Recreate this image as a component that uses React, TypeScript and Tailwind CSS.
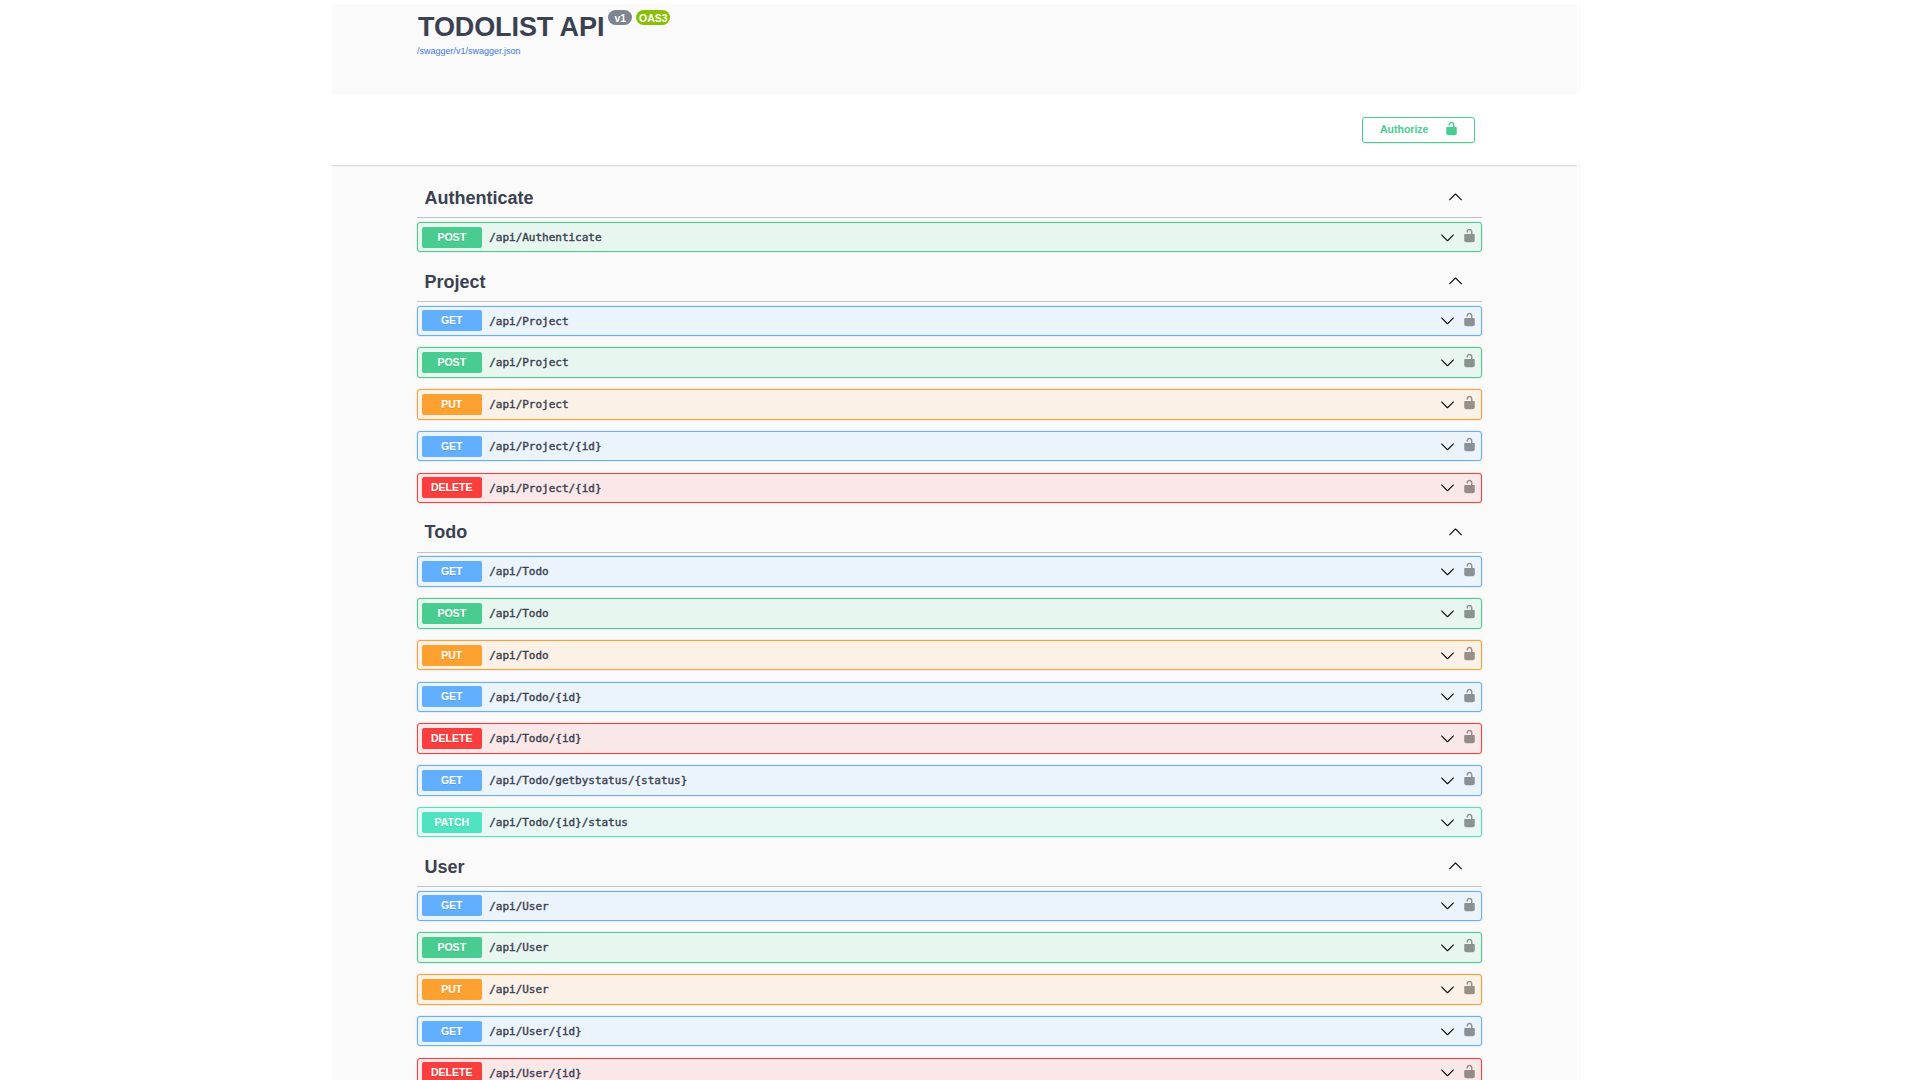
import React from "react";

type Method = "GET" | "POST" | "PUT" | "DELETE" | "PATCH";

const styles: Record<Method, { row: string; badge: string }> = {
  GET: { row: "border-[#61affe] bg-[#ebf3fb]", badge: "bg-[#61affe]" },
  POST: { row: "border-[#49cc90] bg-[#e8f6f0]", badge: "bg-[#49cc90]" },
  PUT: { row: "border-[#fca130] bg-[#fbf1e6]", badge: "bg-[#fca130]" },
  DELETE: { row: "border-[#f93e3e] bg-[#fae7e7]", badge: "bg-[#f93e3e]" },
  PATCH: { row: "border-[#50e3c2] bg-[#e9f8f5]", badge: "bg-[#50e3c2]" },
};

const sections: { name: string; ops: [Method, string][] }[] = [
  { name: "Authenticate", ops: [["POST", "/api/Authenticate"]] },
  {
    name: "Project",
    ops: [
      ["GET", "/api/Project"],
      ["POST", "/api/Project"],
      ["PUT", "/api/Project"],
      ["GET", "/api/Project/{id}"],
      ["DELETE", "/api/Project/{id}"],
    ],
  },
  {
    name: "Todo",
    ops: [
      ["GET", "/api/Todo"],
      ["POST", "/api/Todo"],
      ["PUT", "/api/Todo"],
      ["GET", "/api/Todo/{id}"],
      ["DELETE", "/api/Todo/{id}"],
      ["GET", "/api/Todo/getbystatus/{status}"],
      ["PATCH", "/api/Todo/{id}/status"],
    ],
  },
  {
    name: "User",
    ops: [
      ["GET", "/api/User"],
      ["POST", "/api/User"],
      ["PUT", "/api/User"],
      ["GET", "/api/User/{id}"],
      ["DELETE", "/api/User/{id}"],
    ],
  },
];

function Unlocked({ className }: { className: string }) {
  return (
    <svg viewBox="0 0 20 20" className={`size-[15px] shrink-0 ${className}`} fill="currentColor">
      <path d="M15.8 8H14V5.6C14 2.703 12.665 1 10 1 7.334 1 6 2.703 6 5.6V6h2v-.801C8 3.754 8.797 3 10 3c1.203 0 2 .754 2 2.199V8H4c-.553 0-1 .646-1 1.199V17c0 .549.428 1.139.951 1.307l1.197.387C5.672 18.861 6.55 19 7.1 19h5.8c.549 0 1.428-.139 1.951-.307l1.196-.387c.524-.167.953-.757.953-1.306V9.199C17 8.646 16.352 8 15.8 8z" />
    </svg>
  );
}

function Arrow({ up }: { up?: boolean }) {
  return (
    <svg
      viewBox="0 0 20 20"
      className={`size-[15px] shrink-0 text-black ${up ? "mb-[3px]" : ""}`}
      fill="currentColor"
    >
      {up ? (
        <path d="M17.418 14.908c.272.268.709.268.979 0s.271-.701 0-.969l-7.908-7.83c-.27-.268-.707-.268-.979 0l-7.908 7.83c-.27.268-.27.701 0 .969.271.268.709.268.979 0L10 7.767l7.418 7.141z" />
      ) : (
        <path d="M17.418 6.109c.272-.268.709-.268.979 0s.271.701 0 .969l-7.908 7.83c-.27.268-.707.268-.979 0l-7.908-7.83c-.27-.268-.27-.701 0-.969.271-.268.709-.268.979 0L10 13.25l7.418-7.141z" />
      )}
    </svg>
  );
}

function Operation({ method, path }: { method: Method; path: string }) {
  const s = styles[method];
  return (
    <div
      className={`mb-[11.25px] flex h-[30.5px] items-center rounded-[3px] border pl-[3.75px] pr-[4.25px] shadow-[0_0_2px_rgba(0,0,0,0.19)] ${s.row}`}
    >
      <span
        className={`h-[21px] w-[60px] rounded-[2px] text-center text-[10.5px] leading-[21.5px] font-bold text-white [text-shadow:0_1px_0_rgba(0,0,0,0.1)] ${s.badge}`}
      >
        {method}
      </span>
      <span className="ml-[7.5px] flex-1 pt-[1.75px] font-['DejaVu_Sans_Mono',monospace] text-[11px] leading-[14px] tracking-[-0.02px] [-webkit-text-stroke:0.4px_#3b4151]">
        {path}
      </span>
      <Arrow />
      <Unlocked className="mb-[3.5px] ml-[6.75px] text-black opacity-40" />
    </div>
  );
}

export default function App() {
  return (
    <div className="flex h-[1080px] overflow-hidden bg-white pl-[332px] font-['Liberation_Sans',Arial,sans-serif] text-[#3b4151]">
      <div className="w-[1245px] pt-1">
        <header className="h-[90px] bg-[#fafafa] pl-[85px] pt-[6px]">
          <div className="flex items-start">
            <h1 className="pt-[2px] pl-px text-[27px] leading-[31px] font-bold tracking-[-0.1px] whitespace-nowrap">
              TODOLIST API
            </h1>
            <span className="ml-[4px] h-[15px] w-6 rounded-full bg-[#7d8492] text-center text-[10.5px] leading-[16px] font-bold text-white">
              v1
            </span>
            <span className="ml-1 h-[15px] w-[34px] rounded-full bg-[#89bf04] text-center text-[10.5px] leading-[16px] font-bold text-white">
              OAS3
            </span>
          </div>
          <a className="block pt-[2px] text-[9px] leading-[12px] text-[#4478d8]">/swagger/v1/swagger.json</a>
        </header>
        <div className="flex h-[71px] justify-end bg-white pr-[102px] pt-[23px]">
          <button className="flex h-[26px] w-[113px] items-center justify-between rounded-[3px] border border-[#49cc90] pl-[17px] pr-[15.5px] text-[10.5px] font-bold text-[#49cc90] shadow-[0_1px_1.5px_rgba(0,0,0,0.1)]">
            <span>Authorize</span>
            <Unlocked className="mb-[3px] text-[#49cc90]" />
          </button>
        </div>
        <main className="h-[915px] overflow-hidden border-t border-[#dcdcdc] bg-[#fafafa] pr-[95px] pl-[85px] pt-[13.75px] shadow-[inset_0_1px_0_#f0f0f0]">
          {sections.map((section) => (
            <section key={section.name}>
              <div className="mb-[3.75px] flex h-[38.25px] items-center justify-between border-b border-[#3b4151]/30 pl-[7.5px] pr-[19px]">
                <h3 className="mb-px text-[18px] leading-[22px] font-bold">{section.name}</h3>
                <Arrow up />
              </div>
              {section.ops.map(([method, path]) => (
                <Operation key={method + path} method={method} path={path} />
              ))}
            </section>
          ))}
        </main>
      </div>
      <div className="ml-[2px] flex w-px flex-col pt-1">
        <div className="h-[90px] bg-[#fafafa]" />
        <div className="h-[71px] bg-white" />
        <div className="h-[915px] border-t border-[#dcdcdc] bg-[#fafafa]" />
      </div>
    </div>
  );
}
